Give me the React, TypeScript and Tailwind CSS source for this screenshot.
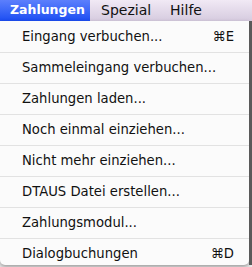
const items: { label: string; shortcut?: string }[] = [
  { label: "Eingang verbuchen...", shortcut: "⌘E" },
  { label: "Sammeleingang verbuchen..." },
  { label: "Zahlungen laden..." },
  { label: "Noch einmal einziehen..." },
  { label: "Nicht mehr einziehen..." },
  { label: "DTAUS Datei erstellen..." },
  { label: "Zahlungsmodul..." },
  { label: "Dialogbuchungen", shortcut: "⌘D" },
];

export default function App() {
  return (
    <div
      className="flex h-[267px] w-[252px] flex-col overflow-hidden bg-[#ececec] text-[#111]"
      style={{ fontFamily: "'DejaVu Sans', 'Lucida Grande', sans-serif" }}
    >
      {/* menu bar */}
      <div className="flex h-[21px] shrink-0 items-center bg-gradient-to-b from-[#f1e9f5] to-[#d6cbdf] text-[14px]">
        <div className="flex h-full w-[90px] items-center bg-gradient-to-b from-[#5c7ffc] to-[#1b4cf2] pl-[10px] text-[12.5px] font-bold text-white">
          Zahlungen
        </div>
        <div className="ml-[11px]">Spezial</div>
        <div className="ml-[19px]">Hilfe</div>
      </div>

      <div className="flex flex-1">
        {/* dropdown panel */}
        <div className="h-[244px] w-[249px] rounded-b-[5px] bg-[#fbfbfb] shadow-[0_2px_4px_rgba(0,0,0,0.35)]">
          {items.map((item, i) => (
            <div
              key={item.label}
              className={
                "flex h-[31px] items-center justify-between pl-[22px] pr-[15px] text-[13.2px] " +
                (i > 0 ? "border-t border-[#e2e2e2]" : "h-[30px]")
              }
            >
              <span>{item.label}</span>
              {item.shortcut && <span>{item.shortcut}</span>}
            </div>
          ))}
        </div>
        <div className="h-[244px] w-[3px] bg-[#5a5a5a]" />
      </div>
    </div>
  );
}
